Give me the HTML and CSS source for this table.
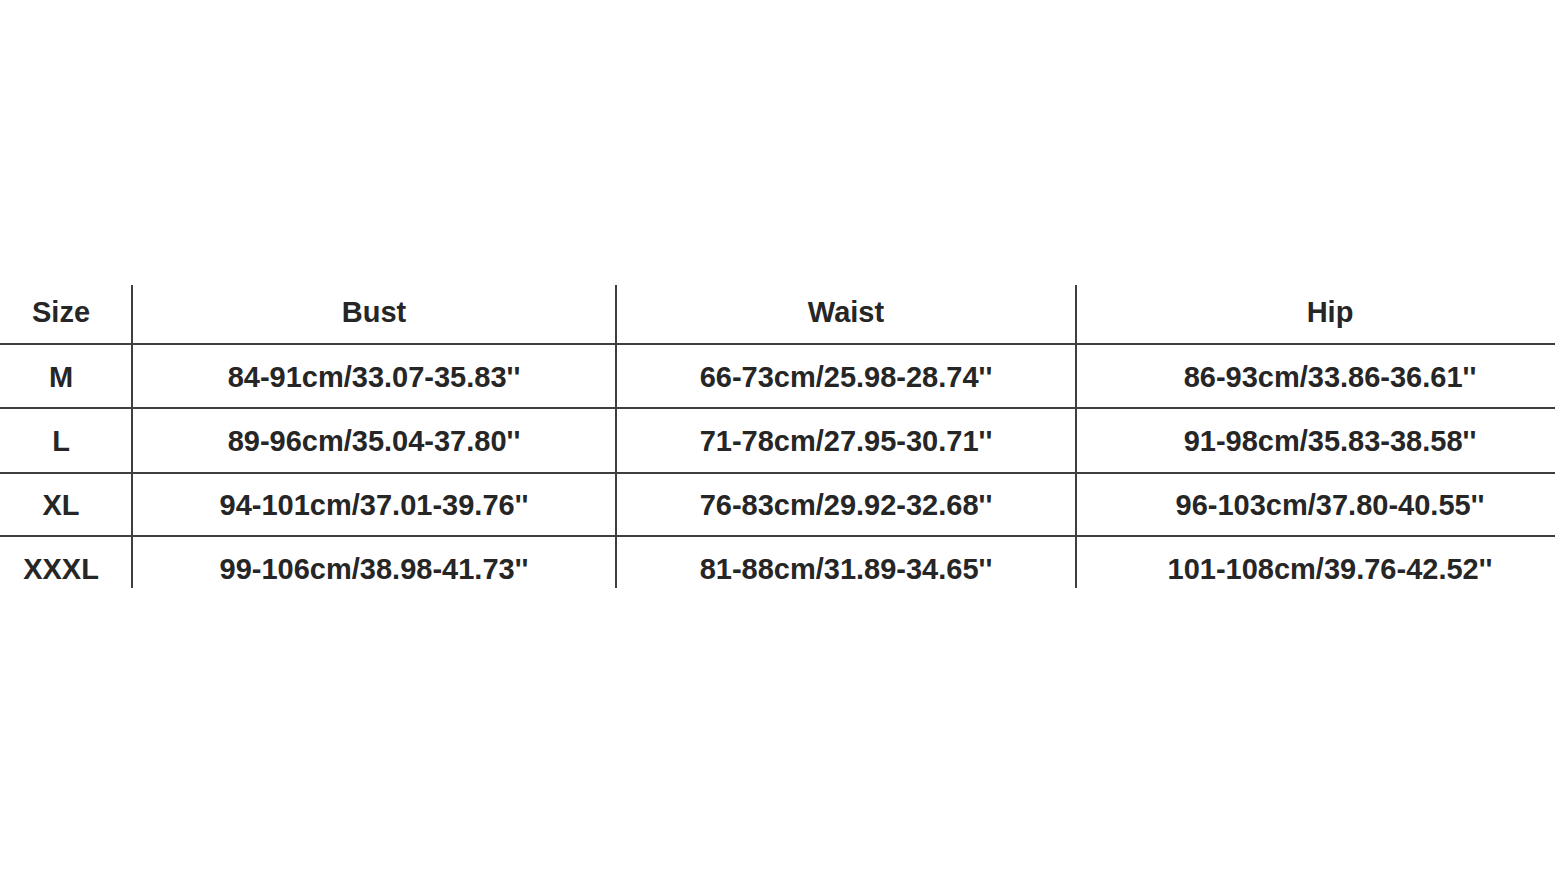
FILE: index.html
```html
<!DOCTYPE html>
<html>
<head>
<meta charset="utf-8">
<link rel="stylesheet" href="styles.css">
</head>
<body>
<div class="page">
  <div class="chart">
    <div class="cell c1 head">Size</div>
    <div class="cell head">Bust</div>
    <div class="cell head">Waist</div>
    <div class="cell c4 head">Hip</div>

    <div class="cell c1">M</div>
    <div class="cell">84-91cm/33.07-35.83''</div>
    <div class="cell">66-73cm/25.98-28.74''</div>
    <div class="cell c4">86-93cm/33.86-36.61''</div>

    <div class="cell c1">L</div>
    <div class="cell">89-96cm/35.04-37.80''</div>
    <div class="cell">71-78cm/27.95-30.71''</div>
    <div class="cell c4">91-98cm/35.83-38.58''</div>

    <div class="cell c1">XL</div>
    <div class="cell">94-101cm/37.01-39.76''</div>
    <div class="cell">76-83cm/29.92-32.68''</div>
    <div class="cell c4">96-103cm/37.80-40.55''</div>

    <div class="cell c1 last">XXXL</div>
    <div class="cell last">99-106cm/38.98-41.73''</div>
    <div class="cell last">81-88cm/31.89-34.65''</div>
    <div class="cell c4 last">101-108cm/39.76-42.52''</div>
  </div>
</div>
</body>
</html>
```

FILE: styles.css
```css
html, body {
  margin: 0;
  padding: 0;
  background: #ffffff;
}

.page {
  width: 1568px;
  height: 878px;
  padding-top: 285px;
  box-sizing: border-box;
  overflow: hidden;
}

.chart {
  width: 1555px;
  display: grid;
  grid-template-columns: 131px 482px 458px 478px;
  grid-template-rows: 58px 62px 63px 61px 51px;
  column-gap: 2px;
  row-gap: 2px;
  background: #3e3e3e;
  font-family: "Liberation Sans", Arial, sans-serif;
  font-weight: bold;
  font-size: 29px;
  color: #262626;
}

.cell {
  background: #ffffff;
  display: flex;
  align-items: center;
  justify-content: center;
  white-space: nowrap;
  padding-top: 2px;
  box-sizing: border-box;
}

.c1 {
  padding-right: 9px;
}

.c4 {
  padding-left: 28px;
}

.head {
  padding-top: 0;
  padding-bottom: 4px;
}

.last {
  padding-top: 13px;
}
```
